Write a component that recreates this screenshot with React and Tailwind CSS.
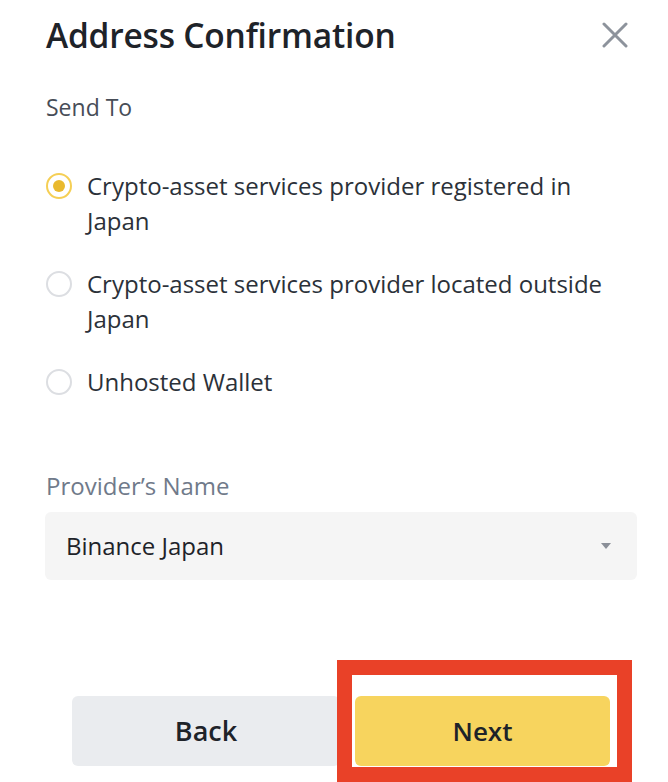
import React from "react";

export default function App() {
  const [selected, setSelected] = React.useState(0);

  const options = [
    "Crypto-asset services provider registered in Japan",
    "Crypto-asset services provider located outside Japan",
    "Unhosted Wallet",
  ];

  return (
    <div
      className="relative w-[668px] h-[782px] bg-white overflow-hidden"
      style={{ fontFamily: "'Open Sans', 'Liberation Sans', sans-serif" }}
    >
      {/* header */}
      <div className="flex items-center justify-between pl-[46px] pr-[38px] pt-[15px]">
        <h1 className="text-[33.5px] leading-[40px] font-semibold text-[#1e2329] tracking-[-0.2px]">
          Address Confirmation
        </h1>
        <button className="w-[30px] h-[30px] flex items-center justify-center">
          <svg width="26" height="26" viewBox="0 0 26 26">
            <path d="M2 2 L24 24 M24 2 L2 24" stroke="#8d939c" strokeWidth="3" strokeLinecap="round" />
          </svg>
        </button>
      </div>

      <div className="pl-[46px] pr-[31px]">
        <p className="mt-[38px] text-[23px] leading-[28px] text-[#474d57]">Send To</p>

        {/* radio options */}
        <div className="mt-[47px] flex flex-col gap-[28px]">
          {options.map((label, i) => (
            <div
              key={i}
              className="flex items-start gap-[15px] cursor-pointer"
              onClick={() => setSelected(i)}
            >
              <div className="h-[35px] flex items-center shrink-0">
                {selected === i ? (
                  <div className="w-[26px] h-[26px] rounded-full border-[2px] border-[#f5cf55] flex items-center justify-center">
                    <div className="w-[12px] h-[12px] rounded-full bg-[#e9b92e]" />
                  </div>
                ) : (
                  <div className="w-[26px] h-[26px] rounded-full border-[2px] border-[#dcdee2]" />
                )}
              </div>
              <span className="text-[24px] leading-[35px] text-[#2b3139] max-w-[530px]">{label}</span>
            </div>
          ))}
        </div>

        {/* provider */}
        <p className="mt-[73px] text-[24px] leading-[28px] text-[#707a8a]">Provider’s Name</p>
        <div className="mt-[12px] h-[68px] bg-[#f5f5f5] rounded-[6px] flex items-center justify-between pl-[21px] pr-[26px] w-[592px] -ml-[1px]">
          <span className="text-[24px] text-[#1e2329]">Binance Japan</span>
          <svg width="10" height="6" viewBox="0 0 10 6">
            <path d="M0 0 L10 0 L5 6 Z" fill="#8a8f98" />
          </svg>
        </div>
      </div>

      {/* buttons */}
      <div className="mt-[116px] flex gap-[15px] pl-[72px]">
        <button className="w-[268px] h-[70px] rounded-[6px] bg-[#eaecef] text-[27px] font-semibold text-[#1e2329]">
          Back
        </button>
        <button className="w-[255px] h-[70px] rounded-[6px] bg-[#f7d45e] text-[26px] font-semibold text-[#1e2329]">
          Next
        </button>
      </div>

      {/* highlight annotation */}
      <div className="absolute left-[337px] top-[660px] w-[295px] h-[122px] border-[15px] border-[#e94128] pointer-events-none" />
    </div>
  );
}
